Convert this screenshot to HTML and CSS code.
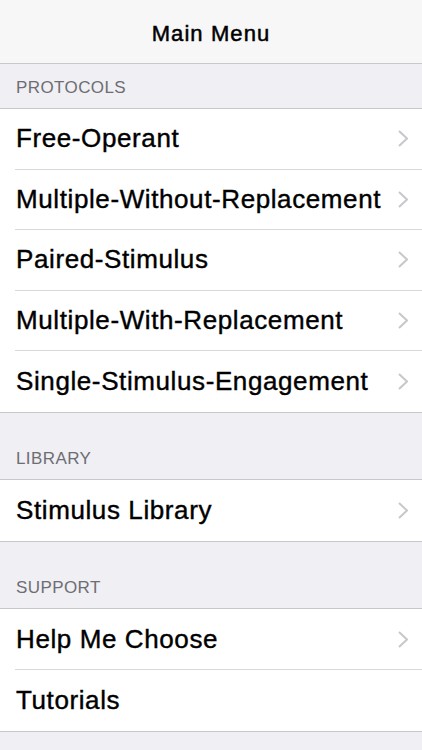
FILE: index.html
```html
<!DOCTYPE html>
<html lang="en">
<head>
    <meta charset="UTF-8">
    <meta name="viewport" content="width=device-width, initial-scale=1.0">
    <title>Main Menu</title>
    <link rel="stylesheet" href="styles.css">
</head>
<body>
    <!-- Navigation bar -->
    <header class="nav-bar">
        <h1 class="nav-title">Main Menu</h1>
    </header>

    <main class="table">
        <!-- Protocols -->
        <div class="section-header first">PROTOCOLS</div>
        <ul class="group">
            <li class="row"><div class="row-body"><span class="row-label">Free-Operant</span><svg class="chevron" viewBox="0 0 10 17"><path d="M1 1l8 7.5-8 7.5"/></svg></div></li>
            <li class="row"><div class="row-body"><span class="row-label">Multiple-Without-Replacement</span><svg class="chevron" viewBox="0 0 10 17"><path d="M1 1l8 7.5-8 7.5"/></svg></div></li>
            <li class="row"><div class="row-body"><span class="row-label">Paired-Stimulus</span><svg class="chevron" viewBox="0 0 10 17"><path d="M1 1l8 7.5-8 7.5"/></svg></div></li>
            <li class="row"><div class="row-body"><span class="row-label">Multiple-With-Replacement</span><svg class="chevron" viewBox="0 0 10 17"><path d="M1 1l8 7.5-8 7.5"/></svg></div></li>
            <li class="row"><div class="row-body"><span class="row-label">Single-Stimulus-Engagement</span><svg class="chevron" viewBox="0 0 10 17"><path d="M1 1l8 7.5-8 7.5"/></svg></div></li>
        </ul>

        <!-- Library -->
        <div class="section-header">LIBRARY</div>
        <ul class="group">
            <li class="row"><div class="row-body"><span class="row-label">Stimulus Library</span><svg class="chevron" viewBox="0 0 10 17"><path d="M1 1l8 7.5-8 7.5"/></svg></div></li>
        </ul>

        <!-- Support -->
        <div class="section-header">SUPPORT</div>
        <ul class="group">
            <li class="row"><div class="row-body"><span class="row-label">Help Me Choose</span><svg class="chevron" viewBox="0 0 10 17"><path d="M1 1l8 7.5-8 7.5"/></svg></div></li>
            <li class="row"><div class="row-body"><span class="row-label">Tutorials</span></div></li>
        </ul>
    </main>
</body>
</html>
```

FILE: styles.css
```css
* {
    margin: 0;
    padding: 0;
    box-sizing: border-box;
}

body, html {
    width: 100%;
    height: 100%;
    overflow: hidden;
    background: #efeff4;
    font-family: "Liberation Sans", Arial, sans-serif;
}

/* Navigation bar */
.nav-bar {
    height: 64px;
    padding-top: 4px;
    background: #f7f7f8;
    border-bottom: 1px solid #c8c7cc;
    display: flex;
    justify-content: center;
    align-items: center;
}

.nav-title {
    font-size: 22px;
    font-weight: normal;
    letter-spacing: 1.1px;
    color: #000;
    -webkit-text-stroke: 0.5px #000;
}

/* Grouped table */
.section-header {
    height: 66px;
    padding: 0 16px 10px;
    display: flex;
    align-items: flex-end;
    font-size: 17px;
    letter-spacing: 0.4px;
    color: #6d6d72;
}

.section-header.first {
    height: 44px;
}

.group {
    list-style: none;
    background: #fff;
    border-top: 1px solid #c8c7cc;
    border-bottom: 1px solid #c8c7cc;
}

.row {
    padding-left: 15px;
}

.row-body {
    height: 60.6px;
    display: flex;
    align-items: center;
    padding-left: 1px;
    padding-right: 14px;
    border-bottom: 1px solid #d9d8dc;
}

.row:last-child .row-body {
    border-bottom: none;
    height: 61px;
}

.row-label {
    flex: 1;
    font-size: 26px;
    letter-spacing: 0.6px;
    color: #000;
    -webkit-text-stroke: 0.4px #000;
    white-space: nowrap;
}

.chevron {
    width: 10px;
    height: 17px;
    fill: none;
    stroke: #c7c7cc;
    stroke-width: 2;
}
```
